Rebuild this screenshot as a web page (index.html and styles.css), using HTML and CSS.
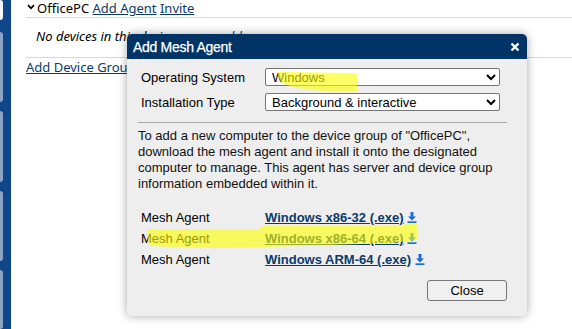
FILE: index.html
```html
<!DOCTYPE html>
<html lang="en">
<head>
  <meta charset="UTF-8">
  <title>MeshCentral - My Devices</title>
  <link rel="stylesheet" href="styles.css">
</head>
<body>
  <div class="sidebar">
    <div class="tab tab-top"></div>
    <div class="tab"></div>
    <div class="tab"></div>
    <div class="tab"></div>
    <div class="tab tab-last"></div>
  </div>

  <div class="main">
    <div class="group-header">
      <svg class="chevron" viewBox="0 0 8 6"><path d="M1 1.2 4 4.3 7 1.2"/></svg><span>OfficePC</span> <a href="#">Add Agent</a> <a href="#">Invite</a>
    </div>
    <div class="group-empty">
      <i>No devices in this device group, <a href="#">add one</a>.</i>
    </div>
    <div class="group-add"><a href="#">Add Device Group</a></div>
  </div>

  <!-- dialog -->
  <div class="dialog">
    <div class="dialog-title">
      <span>Add Mesh Agent</span>
      <svg class="dialog-x" viewBox="0 0 10 10"><path d="M1.5 1.5 8.5 8.5M8.5 1.5 1.5 8.5"/></svg>
    </div>
    <div class="dialog-body">
      <div class="form-grid">
        <label>Operating System</label>
        <select><option>Windows</option></select>
        <label>Installation Type</label>
        <select><option>Background &amp; interactive</option></select>
      </div>
      <hr>
      <p class="info">To add a new computer to the device group of "OfficePC", download the mesh agent and install it onto the designated computer to manage. This agent has server and device group information embedded within it.</p>

      <div class="agents">
        <div class="agent-row"><span>Mesh Agent</span><span><a href="#">Windows x86-32 (.exe)</a> <svg class="dl" viewBox="0 0 10 11"><path d="M3.5 0h3v4.5h2.5L5 8.5 1 4.5h2.5z"/><rect x="0.5" y="9.3" width="9" height="1.7"/></svg></span></div>
        <div class="agent-row"><span>Mesh Agent</span><span><a href="#">Windows x86-64 (.exe)</a> <svg class="dl" viewBox="0 0 10 11"><path d="M3.5 0h3v4.5h2.5L5 8.5 1 4.5h2.5z"/><rect x="0.5" y="9.3" width="9" height="1.7"/></svg></span></div>
        <div class="agent-row"><span>Mesh Agent</span><span><a href="#">Windows ARM-64 (.exe)</a> <svg class="dl" viewBox="0 0 10 11"><path d="M3.5 0h3v4.5h2.5L5 8.5 1 4.5h2.5z"/><rect x="0.5" y="9.3" width="9" height="1.7"/></svg></span></div>
      </div>

      <div class="dialog-buttons">
        <button>Close</button>
      </div>
    </div>
  </div>

  <!-- marker highlights drawn over the screenshot -->
  <svg class="marker" width="572" height="329" viewBox="0 0 572 329">
    <path d="M277 72 L357 73 L357 91 L322 91 L296 88 L281 83 Z"/>
    <path d="M147 229 L258 229 L264 226 L400 225 L417 223 L417 240 L392 243 L268 247 L200 248 L149 246 Z"/>
  </svg>
</body>
</html>
```

FILE: styles.css
```css
body {
  margin: 0;
  display: flex;
  height: 329px;
  overflow: hidden;
  background-color: #ffffff;
  font-family: "Noto Sans", sans-serif;
  font-size: 13px;
  color: #000;
}

a { color: #0b3a6b; }

.sidebar {
  width: 11px;
  flex: none;
  background-color: #10468a;
  display: flex;
  flex-direction: column;
  gap: 9px;
}

.tab {
  width: 3px;
  height: 72px;
  background-color: #8fa4c5;
  border-radius: 0 3px 3px 0;
}

.tab-top {
  height: 20px;
  margin-bottom: 3px;
  background-color: #f4f6fa;
}

.tab-last { height: 60px; }

.main {
  flex: 1;
  padding-left: 15px;
}

.group-header {
  height: 17px;
  line-height: 17px;
  border-bottom: 1px solid #d8d8d8;
  white-space: nowrap;
}

.chevron {
  width: 8px;
  height: 6px;
  margin: 0 2px 0 1px;
  fill: none;
  stroke: #000;
  stroke-width: 1.8;
  vertical-align: 3px;
}

.group-empty {
  height: 39px;
  line-height: 36px;
  padding-left: 10px;
  border-bottom: 1px solid #d8d8d8;
}

.group-add {
  line-height: 18px;
}

/* dialog */
.dialog {
  position: absolute;
  left: 127px;
  top: 34px;
  width: 400px;
  height: 282px;
  background-color: #eeeeee;
  border-radius: 5px;
  box-shadow: 0 0 10px rgba(0, 0, 0, 0.35);
  font-family: "Liberation Sans", Arial, sans-serif;
  font-size: 13px;
  overflow: hidden;
}

.dialog-title {
  height: 25px;
  background-color: #003366;
  color: white;
  display: flex;
  align-items: center;
  justify-content: space-between;
  padding: 0 7px 0 6px;
  font-size: 14px;
  letter-spacing: -0.3px;
  -webkit-text-stroke: 0.25px white;
}

.dialog-x {
  width: 10px;
  height: 10px;
  fill: none;
  stroke: white;
  stroke-width: 2.4;
}

.dialog-body {
  padding: 9px 20px 0 11px;
}

.form-grid {
  display: grid;
  grid-template-columns: 127px 235px;
  row-gap: 7px;
  align-items: center;
}

.form-grid label { padding-left: 3px; }

.form-grid select {
  height: 18px;
  font-family: "Liberation Sans", Arial, sans-serif;
  font-size: 13px;
  padding: 0 2px;
  border: 1px solid #767676;
  border-radius: 2px;
  background-color: white;
}

hr {
  margin: 11px 0 0 0;
  border: none;
  border-top: 1px solid #a8a8a8;
}

.info {
  margin: 5px 0 0 0;
  line-height: 16px;
  color: #111;
}

.agents {
  margin-top: 15px;
}

.agent-row {
  display: grid;
  grid-template-columns: 127px auto;
  height: 21px;
  align-items: center;
}

.agent-row span:first-child { padding-left: 3px; }

.agent-row a {
  font-weight: bold;
  color: #0b3a6b;
}

.dl {
  width: 10px;
  height: 11px;
  fill: #1b6fd6;
  vertical-align: -1px;
}

.dialog-buttons {
  display: flex;
  justify-content: flex-end;
  margin-top: 10px;
}

.dialog-buttons button {
  width: 80px;
  height: 21px;
  font-family: "Liberation Sans", Arial, sans-serif;
  font-size: 13px;
  background-color: #f0f0f0;
  border: 1px solid #767676;
  border-radius: 3px;
}

.marker {
  position: absolute;
  left: 0;
  top: 0;
  pointer-events: none;
}

.marker path {
  fill: #ffff00;
  opacity: 0.6;
}
```
